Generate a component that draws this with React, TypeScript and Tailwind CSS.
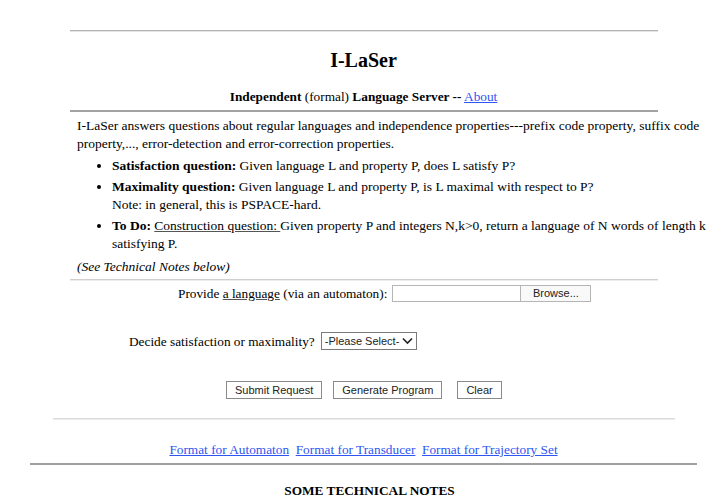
import type { ReactNode } from "react"

function Btn({ children }: { children: ReactNode }) {
    return (
        <button className="h-[18px] border border-[#8a8a8a] bg-white px-[8px] font-['Liberation_Sans',Arial,sans-serif] text-[11px] leading-[16px] text-[#222]">
            {children}
        </button>
    )
}

function Link({ children }: { children: ReactNode }) {
    return <a className="cursor-pointer text-[#2f55f2] underline decoration-[#2f55f2]">{children}</a>
}

export default function App() {
    return (
        <div className="min-h-[498px] w-full overflow-hidden bg-white font-['Liberation_Serif','Times_New_Roman',serif] text-[13.3px] leading-[15px] text-black">
            <hr className="mx-auto mt-[30px] w-[588px] border-b border-t-[#b3b3b3] border-b-[#e4e4e4]" />

            <h2 className="mt-[17px] text-center text-[20px] font-bold leading-[23px]">I-LaSer</h2>

            <p className="mt-[17px] text-center">
                <b>Independent</b> (formal) <b>Language Server --</b> <Link>About</Link>
            </p>

            <hr className="mx-auto mt-[6px] w-[588px] border-t-2 border-t-[#a3a3a3]" />

            {/* intro text runs a bit past the window edge, as in the original */}
            <div className="ml-[77px] mt-[5px] w-[663px] text-[13.5px] leading-[18px]">
                <p>
                    I-LaSer answers questions about regular languages and independence properties---prefix code property, suffix code
                    property,..., error-detection and error-correction properties.
                </p>

                <ul className="mt-[4px] list-disc pl-[35px] [&>li+li]:mt-[3px]">
                    <li>
                        <b>Satisfaction question:</b> Given language L and property P, does L satisfy P?
                    </li>
                    <li>
                        <b>Maximality question:</b> Given language L and property P, is L maximal with respect to P?
                        <br />
                        Note: in general, this is PSPACE-hard.
                    </li>
                    <li>
                        <b>To Do:</b> <u className="decoration-[#555]">Construction question: </u>Given property P and integers N,k&gt;0, return a
                        language of N words of length k satisfying P.
                    </li>
                </ul>

                <p className="mt-[5px] italic">(See Technical Notes below)</p>
            </div>

            <hr className="mx-auto mt-[3px] w-[588px] border-b border-t-[#cfcfcf] border-b-[#ececec]" />

            {/* request form */}
            <div className="mt-[3px] flex h-[18px] items-center pl-[178px]">
                <span>
                    Provide <u className="decoration-[#555]">a language</u> (via an automaton):
                </span>
                <div className="ml-[5px] flex h-[17px] font-['Liberation_Sans',Arial,sans-serif] text-[11px] text-[#222]">
                    <input readOnly className="h-[17px] w-[129px] border border-[#b5b5b5] bg-white outline-none" />
                    <button className="h-[17px] w-[70px] border border-l-0 border-[#b5b5b5] bg-[#f9f9f9] leading-[15px]">Browse...</button>
                </div>
            </div>

            <div className="mt-[30px] flex h-[18px] items-center pl-[129px]">
                <span>Decide satisfaction or maximality?</span>
                <div className="ml-[6px] flex h-[18px] w-[96px] items-center justify-between border border-[#7a7a7a] bg-white pl-[3px] pr-[3px] font-['Liberation_Sans',Arial,sans-serif] text-[11px] text-[#222]">
                    <span>-Please Select-</span>
                    <svg width="11" height="8" viewBox="0 0 11 8" className="text-[#222]">
                        <path d="M1 1.5 L5.5 6 L10 1.5" fill="none" stroke="currentColor" strokeWidth="1.6" />
                    </svg>
                </div>
            </div>

            <div className="mt-[31px] flex h-[18px] items-center pl-[226px]">
                <Btn>Submit Request</Btn>
                <span className="w-[11px]" />
                <Btn>Generate Program</Btn>
                <span className="w-[15px]" />
                <Btn>Clear</Btn>
            </div>

            <hr className="mx-auto mt-[19px] w-[622px] border-b border-t-[#dcdcdc] border-b-[#ebebeb]" />

            <p className="mt-[22px] text-center">
                <Link>Format for Automaton</Link>&nbsp; <Link>Format for Transducer</Link>&nbsp; <Link>Format for Trajectory Set</Link>
            </p>

            <hr className="mx-auto mt-[6px] w-[667px] border-t-2 border-t-[#a0a0a0]" />

            <p className="mt-[18px] pl-[12px] text-center font-bold">SOME TECHNICAL NOTES</p>
        </div>
    )
}
